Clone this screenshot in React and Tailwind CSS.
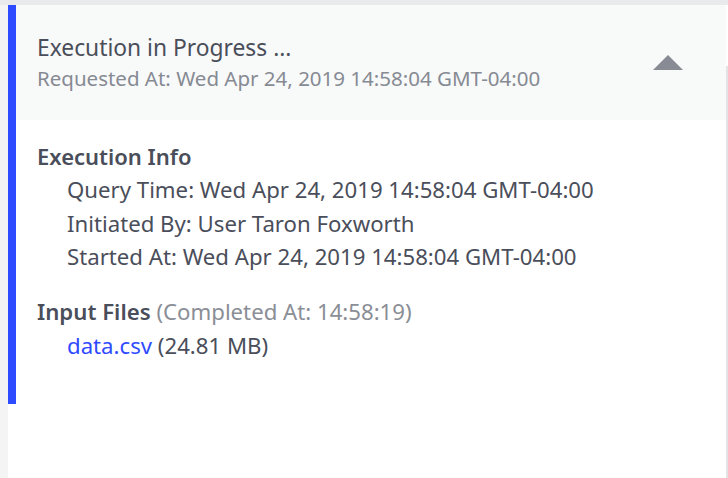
import React from "react";

const executionInfo = [
  { label: "Query Time", value: "Wed Apr 24, 2019 14:58:04 GMT-04:00" },
  { label: "Initiated By", value: "User Taron Foxworth" },
  { label: "Started At", value: "Wed Apr 24, 2019 14:58:04 GMT-04:00" },
];

function CaretUp() {
  return (
    <svg width="30" height="15" viewBox="0 0 30 15" className="shrink-0">
      <path d="M15 0 L30 15 L0 15 Z" fill="#888b93" />
    </svg>
  );
}

export default function App() {
  return (
    <div
      className="flex h-[478px] w-[728px] flex-col overflow-hidden bg-[#f4f4f5] text-[#4a4e5a]"
      style={{ fontFamily: '"Noto Sans", "Open Sans", sans-serif' }}
    >
      <div className="h-[5px] shrink-0 bg-[#e9eaeb]" />
      <div className="flex min-h-0 flex-1">
        <div className="w-2 shrink-0 bg-[#f4f4f5]" />
        <div className="flex-1 bg-white">
          <div className="flex h-[399px] flex-col border-l-8 border-[#2f4bff]">
            <div className="flex h-[115px] items-center justify-between bg-[#f8f9f9] pl-[21px] pr-[43px]">
              <div className="-mt-[1px]">
                <h2 className="text-[22.8px] leading-[31px] text-[#4a4e5a]">Execution in Progress ...</h2>
                <p className="mt-[1px] text-[20.5px] leading-[29px] text-[#868a93]">
                  Requested At: Wed Apr 24, 2019 14:58:04 GMT-04:00
                </p>
              </div>
              <CaretUp />
            </div>
            <div className="pl-[21px] pt-[20px]">
              <h3 className="text-[22px] font-semibold leading-[33px]">Execution Info</h3>
              <ul className="pl-[30px]">
                {executionInfo.map(({ label, value }) => (
                  <li key={label} className="text-[22.2px] leading-[33.5px]">
                    {label}: {value}
                  </li>
                ))}
              </ul>
              <h3 className="mt-[21px] text-[22.2px] leading-[33px]">
                <span className="font-semibold">Input Files</span>{" "}
                <span className="text-[#8a8e96]">(Completed At: 14:58:19)</span>
              </h3>
              <div className="pl-[30px] text-[22.2px] leading-[35px]">
                <a href="#" className="text-[#2f4bff]">data.csv</a> (24.81 MB)
              </div>
            </div>
          </div>
        </div>
        <div className="flex w-[2px] shrink-0 flex-col bg-[#e3e3e5]">
          <div className="h-[61px] bg-white" />
        </div>
      </div>
    </div>
  );
}
